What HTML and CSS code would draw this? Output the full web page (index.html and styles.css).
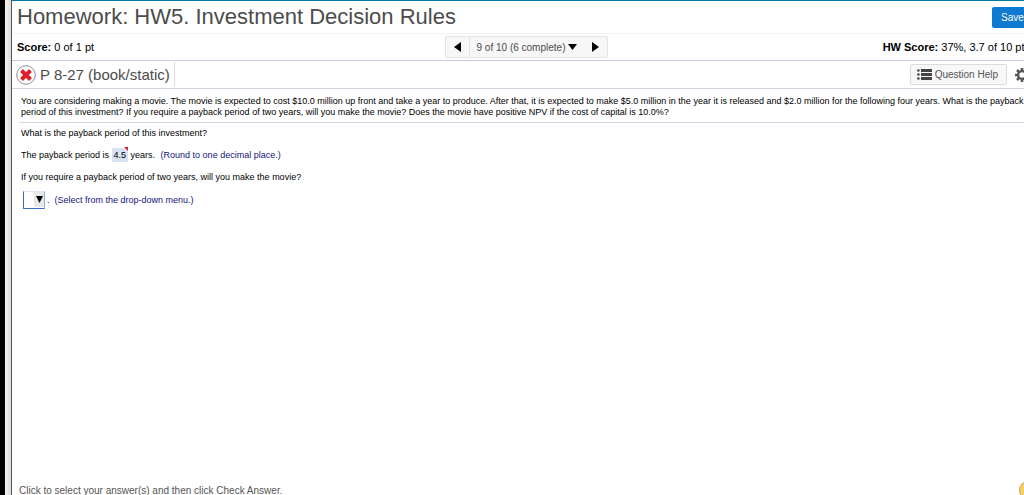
FILE: index.html
```html
<!DOCTYPE html>
<html lang="en">
<head>
<meta charset="utf-8">
<title>Homework: HW5. Investment Decision Rules</title>
<link rel="stylesheet" href="styles.css">
</head>
<body>
<div class="frame">
  <div class="rail"></div>
  <div class="page">
    <header class="titlebar">
      <h1 class="title">Homework: HW5. Investment Decision Rules</h1>
      <button class="save" type="button">Save</button>
    </header>
    <section class="scorebar">
      <p class="score"><b>Score:</b> 0 of 1 pt</p>
      <nav class="pager" aria-label="Questions">
        <button class="pager-btn prev" type="button" aria-label="Previous question"><svg width="7" height="10" viewBox="0 0 7 10"><path d="M7 0v10L0 5z"/></svg></button>
        <button class="pager-btn list" type="button">9 of 10 (6 complete) <svg width="9" height="6" viewBox="0 0 9 6"><path d="M0 0h9L4.500 6z"/></svg></button>
        <button class="pager-btn next" type="button" aria-label="Next question"><svg width="7" height="10" viewBox="0 0 7 10"><path d="M0 0v10l7-5z"/></svg></button>
      </nav>
      <p class="score total"><b>HW Score:</b> 37%, 3.7 of 10 pts</p>
    </section>
    <section class="questionbar">
      <div class="question">
        <svg class="wrong" width="20" height="20" viewBox="0 0 20 20" role="img" aria-label="Incorrect"><circle cx="10" cy="10" r="9.300" fill="#fff" stroke="#8c8c8c"/><path d="M5.500 5.500l9 9M14.500 5.500l-9 9" stroke="#dc1f2b" stroke-width="4"/></svg>
        <h2 class="question-name">P 8-27 (book/static)</h2>
      </div>
      <div class="tools">
        <button class="help" type="button"><svg width="15" height="11" viewBox="0 0 15 11" fill="#444"><path d="M4 0h11v3H4zM4 4h11v3H4zM4 8h11v3H4z"/><circle cx="1.400" cy="1.500" r="1.300"/><circle cx="1.400" cy="5.500" r="1.300"/><circle cx="1.400" cy="9.500" r="1.300"/></svg>Question Help</button>
        <button class="gear" type="button" aria-label="Settings"><svg width="14" height="14" viewBox="0 0 14 14"><g stroke="#555" fill="none"><circle cx="7" cy="7" r="3.900" stroke-width="2.400"/><path d="M7 0v2.500M7 11.500V14M0 7h2.500M11.500 7H14M2 2l1.800 1.800M10.200 10.200L12 12M12 2l-1.800 1.800M3.800 10.200L2 12" stroke-width="2.600"/></g></svg></button>
      </div>
    </section>
    <main class="content">
      <p class="problem">You are considering making a movie. The movie is expected to cost $10.0 million up front and take a year to produce. After that, it is expected to make $5.0 million in the year it is released and $2.0 million for the following four years. What is the payback<br>period of this investment? If you require a payback period of two years, will you make the movie? Does the movie have positive NPV if the cost of capital is 10.0%?</p>
      <div class="answers">
        <p class="line">What is the payback period of this investment?</p>
        <p class="line">The payback period is <span class="value">4.5</span> years. <span class="hint">(Round to one decimal place.)</span></p>
        <p class="line"><label for="decision">If you require a payback period of two years, will you make the movie?</label></p>
        <div class="choice">
          <span class="picker"><select id="decision"><option></option><option>Yes</option><option>No</option></select><svg class="picker-arrow" width="10" height="15" viewBox="0 0 10 15"><path d="M0 0h10v15H0z" fill="#e8e8e8"/><path d="M2 4h7L5.500 11z"/></svg></span>
          <span>.</span>
          <span class="hint">(Select from the drop-down menu.)</span>
        </div>
      </div>
    </main>
    <footer class="footer">
      <p class="instruction">Click to select your answer(s) and then click Check Answer.</p>
      <svg class="badge" width="18" height="18" viewBox="0 0 18 18"><circle cx="9" cy="9" r="8.500" fill="#f8cf62" stroke="#c9a55a"/></svg>
    </footer>
  </div>
</div>
</body>
</html>
```
FILE: styles.css
```css
* { box-sizing: border-box; }
body { margin: 0; background: #fff; color: #000; font-family: "Liberation Sans", Arial, sans-serif; font-size: 11px; }
h1, h2, p { margin: 0; font-weight: normal; white-space: nowrap; }
button { font: inherit; cursor: pointer; }
svg { flex: none; }
.frame { display: flex; min-height: 100vh; border-left: 5px solid #000; }
.rail { flex: none; width: 7px; background: linear-gradient(90deg, #f6f6f4, #dddbd8); border-right: 1px solid #555; }
.page { flex: 1; min-width: 0; display: flex; flex-direction: column; overflow: hidden; border-top: 1px solid #0078a0; }
.titlebar { display: flex; align-items: center; justify-content: space-between; height: 33px; padding-left: 5px; border-bottom: 1px solid #f3f3f3; }
.title { font-size: 22px; line-height: 30px; color: #4c4c4c; }
.save { height: 21px; width: 40px; margin-right: -8px; padding: 0 9px; text-align: left; border: 0; border-radius: 2px; background: #1079d0; color: #fff; font-size: 10px; }
.scorebar { display: grid; grid-template-columns: 1fr auto 1fr; align-items: center; height: 27px; padding-left: 5px; border-bottom: 1px solid #c9cbdc; }
.total { justify-self: end; margin-right: -6px; }
.pager { display: flex; height: 22px; margin-left: 12px; border: 1px solid #e4e4e4; border-radius: 2px; background: #f7f7f7; }
.pager-btn { display: flex; align-items: center; justify-content: center; gap: 3px; width: 23px; padding: 0; border: 0; background: none; color: #4c4c4c; font-size: 10px; }
.list { width: auto; padding: 0 7px; border-left: 1px solid #e4e4e4; }
.pager svg { fill: #000; }
.questionbar { display: flex; align-items: center; justify-content: space-between; height: 28px; padding-left: 4px; border-bottom: 1px solid #d3d5e2; }
.question { display: flex; align-items: center; gap: 4px; height: 25px; padding-right: 4px; border-right: 1px solid #ddd; }
.question-name { font-size: 15px; color: #4c4c4c; }
.tools { display: flex; align-items: center; gap: 8px; margin-right: -5px; }
.help { display: flex; align-items: center; gap: 3px; height: 21px; padding: 0 8px 0 6px; border: 1px solid #dcdcdc; border-radius: 2px; background: #f8f8f8; color: #555; font-size: 10px; }
.gear { display: flex; padding: 0; border: 0; background: none; }
.content { flex: 1; padding-left: 7px; font-size: 9px; }
.problem { padding: 7px 0 4px 2px; line-height: 11px; border-bottom: 1px solid #d3d8e4; }
.answers { display: flex; flex-direction: column; gap: 10px; padding: 4px 2px; }
.line { line-height: 12px; }
.hint { margin-left: 3px; color: #14147d; }
.value { position: relative; display: inline-block; margin: -1px 0; padding: 1px 2px; background: #d9e2f2; }
.value::after { content: ""; position: absolute; top: -1px; right: 0; border-top: 4px solid #d8232e; border-left: 4px solid transparent; }
.choice { display: flex; align-items: center; gap: 2px; margin-top: -2px; padding-left: 2px; }
.picker { position: relative; display: flex; }
.picker select { appearance: none; width: 22px; height: 18px; border: 1px solid #3c6fc4; border-top-color: #dfe6f2; border-right-color: #8fb0e8; border-radius: 0; background: #fff; }
.picker-arrow { position: absolute; right: 1px; top: 1px; pointer-events: none; }
.footer { display: flex; align-items: center; justify-content: space-between; height: 10px; padding-left: 7px; color: #555; font-size: 10px; }
.badge { margin-right: -13px; }
```
